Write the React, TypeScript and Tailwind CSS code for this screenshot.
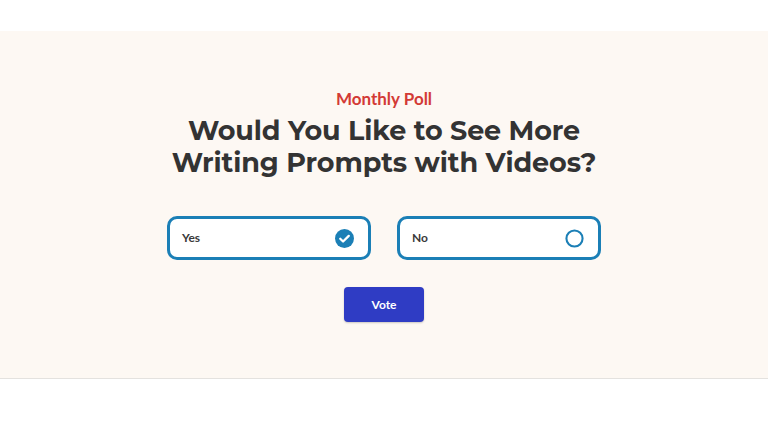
import { useState } from 'react';

export default function App() {
  const [choice, setChoice] = useState<'yes' | 'no'>('yes');

  return (
    <div className="min-h-screen bg-white pt-[31px] font-['Montserrat','DejaVu_Sans',sans-serif]">
      <section className="flex h-[348px] flex-col items-center border-b border-[#e4e2df] bg-[#fdf8f3] pt-[56px]">
        <p className="font-['Lato',sans-serif] text-[17px] font-bold leading-[24px] text-[#d33a35]">Monthly Poll</p>
        <h1 className="mt-[4px] text-center text-[27px] font-bold leading-[32px] tracking-[-0.1px] text-[#333]">
          Would You Like to See More
          <br />
          Writing Prompts with Videos?
        </h1>

        <div className="mt-[37px] flex gap-[26px]">
          <Option label="Yes" checked={choice === 'yes'} onClick={() => setChoice('yes')} />
          <Option label="No" checked={choice === 'no'} onClick={() => setChoice('no')} />
        </div>

        <button className="mt-[27px] h-[35px] w-[80px] rounded-[4px] bg-[#2f3cc4] font-['Lato',sans-serif] text-[12px] font-bold text-white shadow-[0_1px_2px_rgba(0,0,0,.2)]">
          Vote
        </button>
      </section>
    </div>
  );
}

function Option({ label, checked, onClick }: { label: string; checked: boolean; onClick: () => void }) {
  return (
    <button
      type="button"
      onClick={onClick}
      className="flex h-[44px] w-[204px] items-center justify-between rounded-[10px] border-[3px] border-[#1b7fb6] bg-white pl-[12px] pr-[14px]"
    >
      <span className="font-['Lato',sans-serif] text-[12px] font-bold text-[#3a3a3a]">{label}</span>
      {checked ? (
        <svg width="19" height="19" viewBox="0 0 20 20">
          <circle cx="10" cy="10" r="10" fill="#1b7fb6" />
          <path d="M5.5 10.2l3 3 6-6" fill="none" stroke="#fff" strokeWidth="2.4" strokeLinecap="round" strokeLinejoin="round" />
        </svg>
      ) : (
        <svg width="19" height="19" viewBox="0 0 20 20">
          <circle cx="10" cy="10" r="8.5" fill="none" stroke="#1b7fb6" strokeWidth="2.2" />
        </svg>
      )}
    </button>
  );
}
